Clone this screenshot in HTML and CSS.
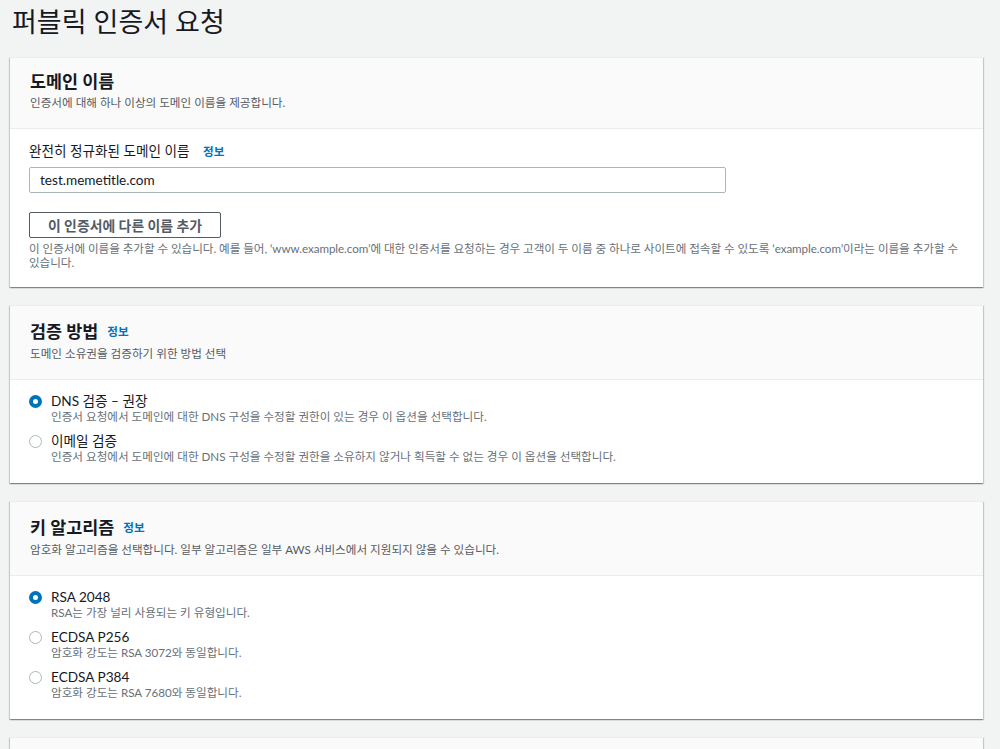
FILE: index.html
```html
<!DOCTYPE html>
<html lang="ko">
<head>
<meta charset="utf-8">
<title>퍼블릭 인증서 요청</title>
<link rel="stylesheet" href="styles.css">
</head>
<body>
<div class="page">
  <h1 class="page-title">퍼블릭 인증서 요청</h1>

  <section class="card">
    <div class="card-header">
      <h2 class="card-title">도메인 이름</h2>
      <p class="card-desc">인증서에 대해 하나 이상의 도메인 이름을 제공합니다.</p>
    </div>
    <div class="card-body">
      <div class="field-label">완전히 정규화된 도메인 이름 <a class="info">정보</a></div>
      <div class="input">test.memetitle.com</div>
      <button class="btn">이 인증서에 다른 이름 추가</button>
      <p class="hint">이 인증서에 이름을 추가할 수 있습니다. 예를 들어, ‘www.example.com’에 대한 인증서를 요청하는 경우 고객이 두 이름 중 하나로 사이트에 접속할 수 있도록 ‘example.com’이라는 이름을 추가할 수 있습니다.</p>
    </div>
  </section>

  <section class="card">
    <div class="card-header">
      <h2 class="card-title with-info">검증 방법 <a class="info">정보</a></h2>
      <p class="card-desc">도메인 소유권을 검증하기 위한 방법 선택</p>
    </div>
    <div class="card-body radios">
      <div class="option">
        <span class="radio checked"></span>
        <div class="opt-text">
          <div class="opt-label">DNS 검증 – 권장</div>
          <div class="opt-desc">인증서 요청에서 도메인에 대한 DNS 구성을 수정할 권한이 있는 경우 이 옵션을 선택합니다.</div>
        </div>
      </div>
      <div class="option">
        <span class="radio"></span>
        <div class="opt-text">
          <div class="opt-label">이메일 검증</div>
          <div class="opt-desc">인증서 요청에서 도메인에 대한 DNS 구성을 수정할 권한을 소유하지 않거나 획득할 수 없는 경우 이 옵션을 선택합니다.</div>
        </div>
      </div>
    </div>
  </section>

  <section class="card">
    <div class="card-header">
      <h2 class="card-title with-info">키 알고리즘 <a class="info">정보</a></h2>
      <p class="card-desc">암호화 알고리즘을 선택합니다. 일부 알고리즘은 일부 AWS 서비스에서 지원되지 않을 수 있습니다.</p>
    </div>
    <div class="card-body radios">
      <div class="option">
        <span class="radio checked"></span>
        <div class="opt-text">
          <div class="opt-label">RSA 2048</div>
          <div class="opt-desc">RSA는 가장 널리 사용되는 키 유형입니다.</div>
        </div>
      </div>
      <div class="option">
        <span class="radio"></span>
        <div class="opt-text">
          <div class="opt-label">ECDSA P256</div>
          <div class="opt-desc">암호화 강도는 RSA 3072와 동일합니다.</div>
        </div>
      </div>
      <div class="option">
        <span class="radio"></span>
        <div class="opt-text">
          <div class="opt-label">ECDSA P384</div>
          <div class="opt-desc">암호화 강도는 RSA 7680와 동일합니다.</div>
        </div>
      </div>
    </div>
  </section>

  <section class="card card-next">
    <div class="card-header card-header-empty"></div>
  </section>
</div>
</body>
</html>
```

FILE: styles.css
```css
html, body {
  margin: 0;
  padding: 0;
  background: #f2f3f3;
}
body {
  font-family: "Lato", "Noto Sans CJK KR", sans-serif;
  color: #16191f;
}
.page {
  width: 973px;
  padding: 4px 0 0 10px;
}
.page-title {
  margin: 0 0 17px 2px;
  font-family: "Noto Sans", "Noto Sans CJK KR", sans-serif;
  font-size: 27px;
  font-weight: 400;
  line-height: 36px;
  color: #16191f;
}
.card {
  background: #fff;
  border-top: 1px solid #eaeded;
  box-shadow: 0 1px 1px 0 rgba(0, 28, 36, 0.3), 1px 1px 1px 0 rgba(0, 28, 36, 0.15), -1px 1px 1px 0 rgba(0, 28, 36, 0.15);
  margin-bottom: 18px;
}
.card-header {
  background: #fafafa;
  border-bottom: 1px solid #eaeded;
  padding: 13px 20px 17px;
}
.card-header-empty {
  height: 60px;
}
.card-title {
  margin: 0;
  font-size: 17.4px;
  font-weight: 700;
  line-height: 22px;
  display: flex;
  align-items: center;
  gap: 9px;
}
.card-title.with-info {
  line-height: 24px;
  padding-top: 1px;
}
.card-desc {
  margin: 2px 0 0;
  font-size: 11.6px;
  line-height: 16px;
  color: #545b64;
}
.info {
  color: #0073bb;
  font-size: 11.6px;
  font-weight: 700;
  margin-left: 10px;
}
.card-title .info {
  margin-left: 0;
}
.card-body {
  padding: 12px 20px 17px 19px;
}
.field-label {
  font-size: 13.6px;
  line-height: 20px;
}
.input {
  margin-top: 5px;
  width: 675px;
  height: 24px;
  border: 1px solid #aab7b8;
  border-radius: 2px;
  padding: 0 10px;
  font-size: 13.6px;
  line-height: 24px;
}
.btn {
  display: block;
  margin-top: 19px;
  width: 192px;
  height: 26px;
  border: 1px solid #545b64;
  border-radius: 2px;
  background: #fff;
  color: #545b64;
  font-family: inherit;
  font-size: 13.9px;
  font-weight: 700;
  padding: 0;
}
.hint {
  margin: 4px 0 0;
  font-size: 11.6px;
  line-height: 14px;
  letter-spacing: -0.05px;
  color: #687078;
}
.radios {
  padding: 12px 20px 19px 19px;
  display: flex;
  flex-direction: column;
  gap: 8px;
}
.option {
  display: flex;
  gap: 9px;
}
.radio {
  flex: none;
  box-sizing: border-box;
  width: 13px;
  height: 13px;
  margin: 3px 0 0;
  border-radius: 50%;
  border: 1px solid #aab7b8;
  background: #fff;
}
.radio.checked {
  border: 4px solid #0073bb;
}
.opt-label {
  font-size: 13.6px;
  line-height: 18px;
}
.opt-desc {
  font-size: 11.6px;
  line-height: 14px;
  color: #687078;
}
```
